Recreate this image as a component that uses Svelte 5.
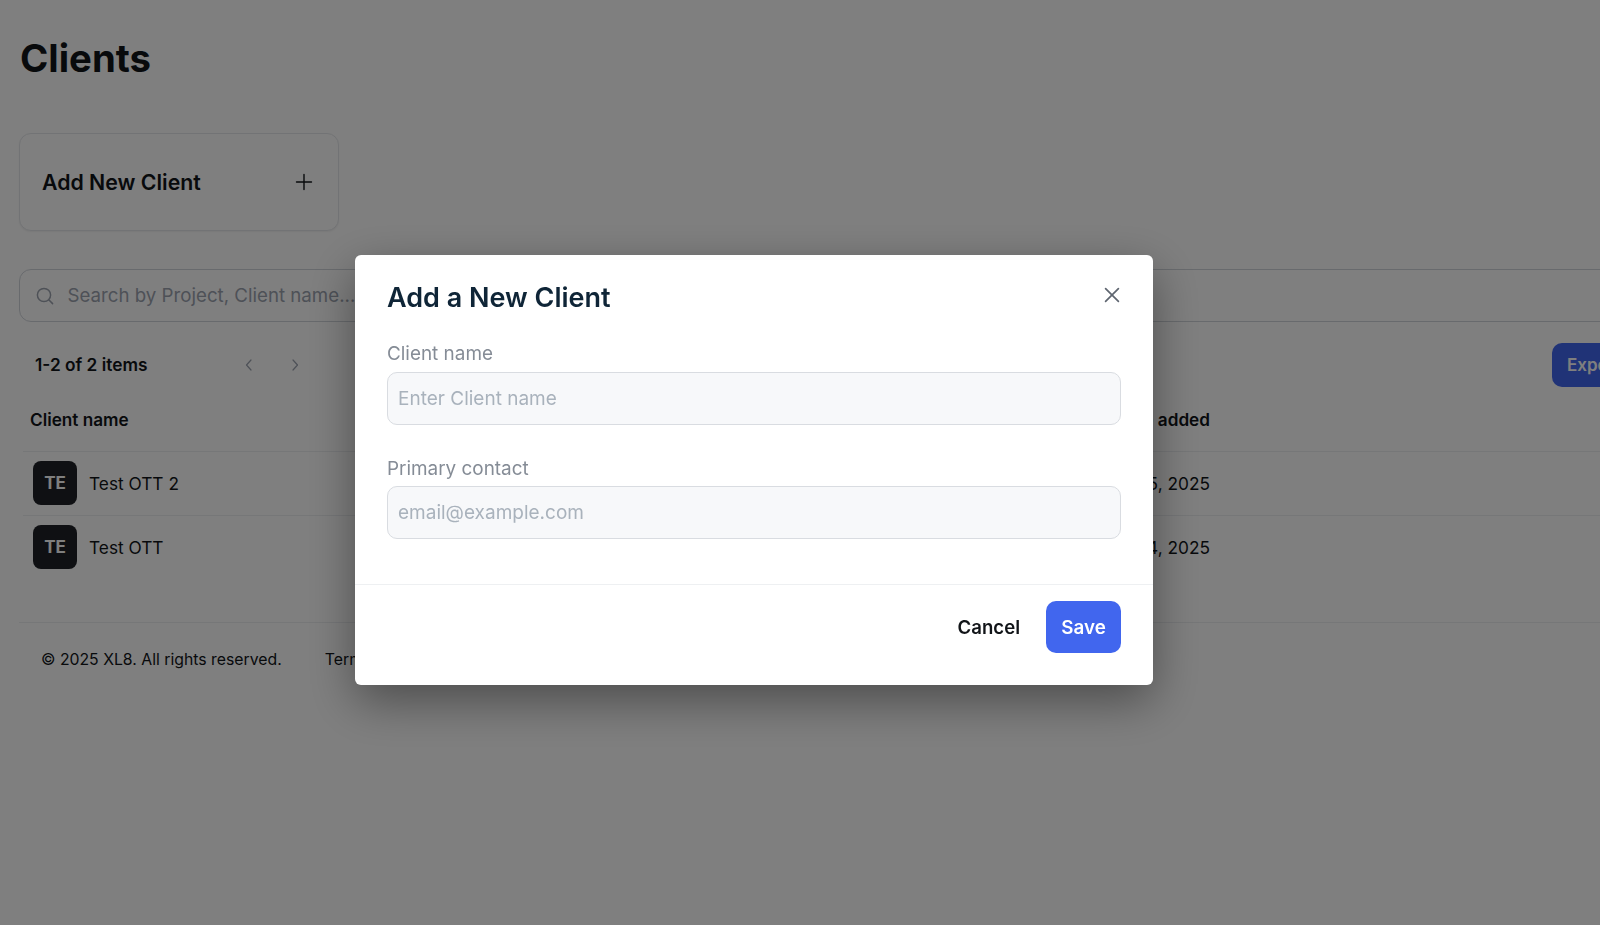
<script>
  const clients = [
    { name: 'Test OTT 2', added: 'Feb 25, 2025' },
    { name: 'Test OTT', added: 'Feb 14, 2025' }
  ];
</script>

<div class="page">
  <h1>Clients</h1>

  <button class="add-card">
    <span>Add New Client</span>
    <svg width="20" height="20" viewBox="0 0 20 20" fill="none" stroke="currentColor" stroke-width="1.4" stroke-linecap="round">
      <path d="M10 2.5v15M2.5 10h15" />
    </svg>
  </button>

  <div class="search">
    <svg width="20" height="20" viewBox="0 0 20 20" fill="none" stroke="currentColor" stroke-width="1.5" stroke-linecap="round">
      <circle cx="9" cy="9" r="6.6" />
      <path d="M14 14l3.6 3.6" />
    </svg>
    <span>Search by Project, Client name...</span>
  </div>

  <div class="toolbar">
    <span class="count">1-2 of 2 items</span>
    <div class="pager">
      <svg width="16" height="16" viewBox="0 0 16 16" fill="none" stroke="currentColor" stroke-width="1.2" stroke-linecap="round" stroke-linejoin="round">
        <path d="M10 3L5.5 8l4.5 5" />
      </svg>
      <svg width="16" height="16" viewBox="0 0 16 16" fill="none" stroke="currentColor" stroke-width="1.2" stroke-linecap="round" stroke-linejoin="round">
        <path d="M6 3l4.5 5L6 13" />
      </svg>
    </div>
    <button class="export">Export</button>
  </div>

  <div class="table">
    <div class="row head">
      <span class="col-name">Client name</span>
      <span class="col-date">Date added</span>
    </div>
    {#each clients as client}
      <div class="row body">
        <span class="col-name">
          <span class="avatar">TE</span>
          {client.name}
        </span>
        <span class="col-date">{client.added}</span>
      </div>
    {/each}
  </div>

  <footer>
    <span>© 2025 XL8. All rights reserved.</span>
    <span>Terms of Service</span>
  </footer>
</div>

<div class="overlay">
  <div class="modal" role="dialog" aria-label="Add a New Client">
    <div class="modal-body">
      <div class="modal-head">
        <h2>Add a New Client</h2>
        <button class="close" aria-label="Close">
          <svg width="20" height="20" viewBox="0 0 20 20" fill="none" stroke="currentColor" stroke-width="1.7" stroke-linecap="round">
            <path d="M3.6 3.6l12.8 12.8M16.4 3.6L3.6 16.4" />
          </svg>
        </button>
      </div>
      <label class="field">
        <span>Client name</span>
        <input type="text" placeholder="Enter Client name" />
      </label>
      <label class="field">
        <span>Primary contact</span>
        <input type="text" placeholder="email@example.com" />
      </label>
    </div>
    <div class="modal-foot">
      <button class="cancel">Cancel</button>
      <button class="save">Save</button>
    </div>
  </div>
</div>

<style>
  :global(body) {
    background: #fff;
    overflow: hidden;
  }

  * {
    box-sizing: border-box;
  }

  button,
  input {
    font-family: inherit;
  }

  .page {
    width: 1660px;
    height: 925px;
    padding: 34px 0 0 19px;
    font-family: Inter, 'Liberation Sans', sans-serif;
    color: #111418;
  }

  h1 {
    margin: 0 0 0 1px;
    font-size: 38.3px;
    line-height: 48px;
    font-weight: 700;
  }

  .add-card {
    display: flex;
    align-items: center;
    justify-content: space-between;
    width: 320px;
    height: 98px;
    margin-top: 51px;
    padding: 0 24px 0 22px;
    background: #fff;
    border: 1.5px solid #e5e7eb;
    border-radius: 12px;
    box-shadow: 0 1px 2px rgba(0, 0, 0, 0.06);
    color: #111418;
    font-size: 21.3px;
    font-weight: 600;
  }

  .search {
    display: flex;
    align-items: center;
    gap: 12.5px;
    height: 53px;
    margin-top: 38px;
    padding-left: 15px;
    border: 1.5px solid #d1d5db;
    border-radius: 12px;
    color: #9ca3af;
    font-size: 18.7px;
    white-space: nowrap;
  }

  .search svg {
    flex: none;
  }

  .toolbar {
    display: flex;
    align-items: center;
    height: 44px;
    margin-top: 21px;
    padding-left: 16px;
  }

  .count {
    width: 206px;
    padding-bottom: 1px;
    font-size: 17.3px;
    font-weight: 600;
  }

  .pager {
    display: flex;
    gap: 30px;
    color: #9ca3af;
  }

  .export {
    margin-left: auto;
    margin-right: 8px;
    width: 100px;
    height: 44px;
    padding: 0 0 0 15px;
    text-align: left;
    border: none;
    border-radius: 10px;
    background: #4166ee;
    color: #fff;
    font-size: 17px;
    font-weight: 600;
  }

  .table {
    margin-top: 1px;
    width: 1640px;
  }

  .row {
    display: grid;
    grid-template-columns: 1067px 120px 1fr;
    align-items: center;
    margin-left: 4px;
  }

  .head {
    height: 63px;
    font-size: 17.2px;
    font-weight: 600;
  }

  .head .col-name {
    padding-left: 7px;
  }

  .body {
    height: 64px;
    padding-bottom: 1px;
    border-top: 1px solid #eceef1;
    font-size: 17.3px;
  }

  .body .col-name {
    padding-left: 10px;
    gap: 12px;
  }

  .col-date {
    text-align: right;
    white-space: nowrap;
  }

  .col-name {
    display: flex;
    align-items: center;
    gap: 13px;
  }

  .avatar {
    display: flex;
    align-items: center;
    justify-content: center;
    width: 44px;
    height: 44px;
    border-radius: 8px;
    background: #1f2126;
    color: #fff;
    font-size: 17px;
    font-weight: 700;
  }

  footer {
    display: flex;
    gap: 43px;
    margin-top: 43px;
    padding: 26px 0 0 22px;
    border-top: 1px solid #eceef1;
    font-size: 15.8px;
    line-height: 22px;
  }

  .overlay {
    position: fixed;
    inset: 0;
    display: flex;
    justify-content: center;
    align-items: flex-start;
    padding: 255px 92px 0 0;
    background: rgba(0, 0, 0, 0.5);
    font-family: Inter, 'Liberation Sans', sans-serif;
  }

  .modal {
    width: 798px;
    height: 430px;
    display: flex;
    flex-direction: column;
    background: #fff;
    border-radius: 6px;
    box-shadow: 0 16px 48px rgba(0, 0, 0, 0.4);
  }

  .modal-body {
    flex: 1;
    padding: 25px 32px 0;
  }

  .modal-head {
    display: flex;
    align-items: center;
    justify-content: space-between;
    height: 36px;
    margin-bottom: 26px;
  }

  h2 {
    margin: 0;
    font-size: 27px;
    line-height: 36px;
    font-weight: 600;
    color: #0f2537;
  }

  .close {
    display: flex;
    margin: -6px -1px 0 0;
    padding: 0;
    border: none;
    background: none;
    color: #5f6670;
  }

  .field {
    display: flex;
    flex-direction: column;
    gap: 5.5px;
    margin-bottom: 32px;
  }

  .field span {
    font-size: 18.9px;
    line-height: 24px;
    color: #858c96;
  }

  input {
    width: 100%;
    height: 53px;
    padding: 0 10px;
    background: #f7f8fa;
    border: 1.5px solid #d9dce1;
    border-radius: 10px;
    font-size: 19px;
    outline: none;
  }

  input::placeholder {
    color: #a9b2bc;
    opacity: 1;
  }

  .modal-foot {
    display: flex;
    align-items: flex-start;
    justify-content: flex-end;
    gap: 26px;
    height: 101px;
    padding: 16px 32px 0;
    border-top: 1px solid #eef0f2;
  }

  .cancel {
    height: 52px;
    padding: 0;
    border: none;
    background: none;
    color: #111418;
    font-size: 18.6px;
    font-weight: 600;
  }

  .save {
    width: 75px;
    height: 52px;
    border: none;
    border-radius: 10px;
    background: #4166ee;
    color: #fff;
    font-size: 18.8px;
    font-weight: 600;
  }
</style>
